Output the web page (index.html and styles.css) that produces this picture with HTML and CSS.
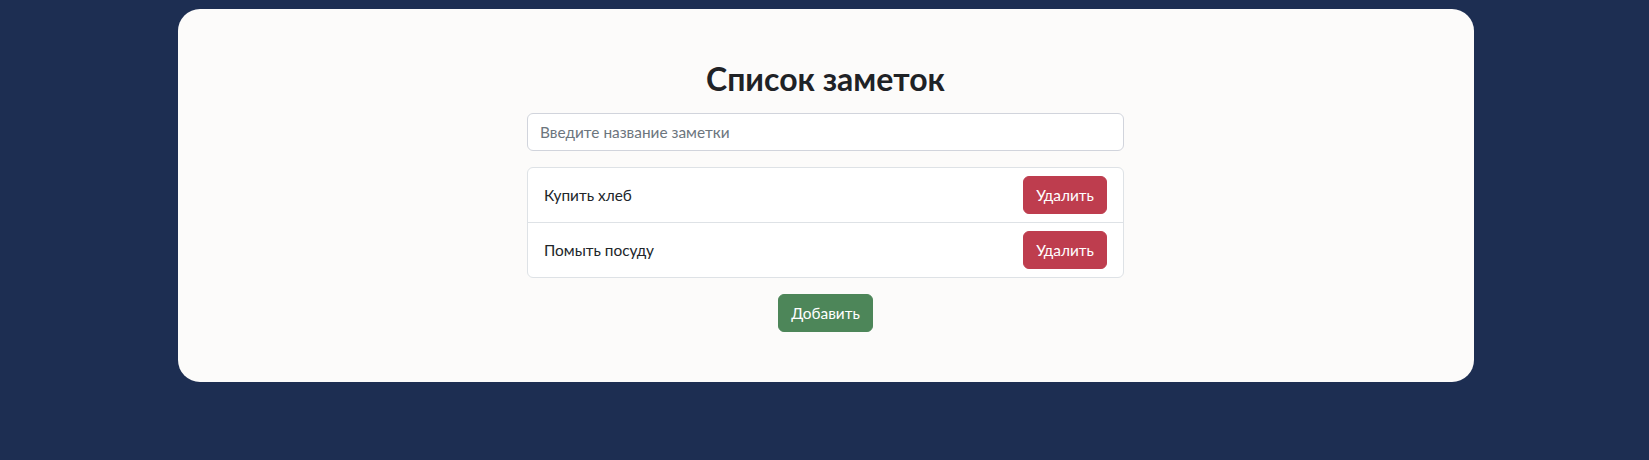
FILE: index.html
```html
<!DOCTYPE html>
<html lang="ru">
<head>
<meta charset="utf-8">
<title>Список заметок</title>
<link rel="stylesheet" href="styles.css">
</head>
<body>
<main class="card">
  <div class="notes">
    <h2 class="title">Список заметок</h2>
    <input class="field" type="text" placeholder="Введите название заметки">
    <ul class="list">
      <li class="item"><span class="item-text">Купить хлеб</span><button class="btn btn-danger">Удалить</button></li>
      <li class="item"><span class="item-text">Помыть посуду</span><button class="btn btn-danger">Удалить</button></li>
    </ul>
    <div class="actions"><button class="btn btn-success">Добавить</button></div>
  </div>
</main>
</body>
</html>
```
FILE: styles.css
```css
* { box-sizing: border-box; }
html, body { margin: 0; padding: 0; }
body {
  background: #1d2e52;
  font-family: "Lato", "Liberation Sans", sans-serif;
  font-size: 15.4px;
  line-height: 24px;
  color: #212529;
  height: 460px;
}
.card {
  width: 1296px;
  margin: 9px 0 0 calc(50% - 647px);
  background: #fcfbfa;
  border-radius: 22px;
  padding: 51px 0 50px;
}
.notes {
  width: 597px;
  margin: 0 auto;
  display: flex;
  flex-direction: column;
  gap: 16px;
}
.title {
  margin: 0 0 -1px;
  text-align: center;
  font-size: 32px;
  font-weight: 700;
  line-height: 38.4px;
  color: #1f2226;
}
.field {
  display: block;
  width: 100%;
  height: 38px;
  padding: 0 12px;
  border: 1px solid #d1d4dc;
  border-radius: 6px;
  background: #fff;
  font: inherit;
  color: #212529;
  outline: none;
}
.field::placeholder { color: #6c757d; opacity: 1; }
.list {
  list-style: none;
  margin: 0;
  padding: 0;
  border: 1px solid #dee2e6;
  border-radius: 6px;
  background: #fff;
}
.item {
  display: flex;
  justify-content: space-between;
  align-items: center;
  padding: 8px 16px;
}
.item + .item { border-top: 1px solid #dee2e6; }
.btn {
  height: 38px;
  padding: 0 12px;
  border: 1px solid transparent;
  border-radius: 6px;
  font: inherit;
  color: #fff;
  cursor: pointer;
}
.btn-danger { background: #be3d4e; border-color: #be3d4e; }
.btn-success { background: #4d8659; border-color: #4d8659; }
.actions { display: flex; justify-content: center; }
```
